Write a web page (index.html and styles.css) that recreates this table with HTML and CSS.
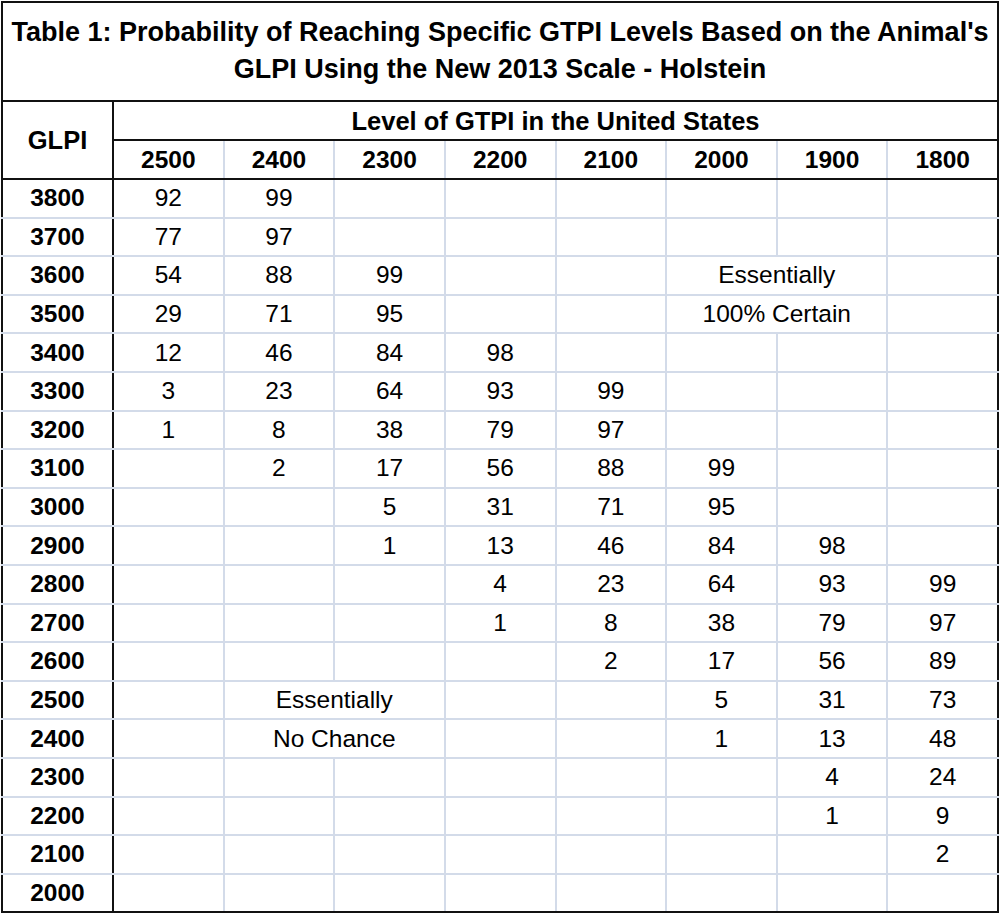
FILE: index.html
```html
<!DOCTYPE html>
<html>
<head>
<meta charset="utf-8">
<link rel="stylesheet" href="styles.css">
</head>
<body>
<table class="tbl">
  <colgroup>
    <col class="c-first">
    <col><col><col><col><col><col><col><col>
  </colgroup>
  <thead>
    <tr class="r-title">
      <th colspan="9" class="title">Table 1: Probability of Reaching Specific GTPI Levels Based on the Animal's<br>GLPI Using the New 2013 Scale - Holstein</th>
    </tr>
    <tr class="r-h1">
      <th rowspan="2" class="glpi-h">GLPI</th>
      <th colspan="8" class="level-h">Level of GTPI in the United States</th>
    </tr>
    <tr class="r-h2">
      <th>2500</th><th>2400</th><th>2300</th><th>2200</th><th>2100</th><th>2000</th><th>1900</th><th>1800</th>
    </tr>
  </thead>
  <tbody>
    <tr><th>3800</th><td>92</td><td>99</td><td></td><td></td><td></td><td></td><td></td><td></td></tr>
    <tr><th>3700</th><td>77</td><td>97</td><td></td><td></td><td></td><td></td><td></td><td></td></tr>
    <tr><th>3600</th><td>54</td><td>88</td><td>99</td><td></td><td></td><td colspan="2">Essentially</td><td></td></tr>
    <tr><th>3500</th><td>29</td><td>71</td><td>95</td><td></td><td></td><td colspan="2">100% Certain</td><td></td></tr>
    <tr><th>3400</th><td>12</td><td>46</td><td>84</td><td>98</td><td></td><td></td><td></td><td></td></tr>
    <tr><th>3300</th><td>3</td><td>23</td><td>64</td><td>93</td><td>99</td><td></td><td></td><td></td></tr>
    <tr><th>3200</th><td>1</td><td>8</td><td>38</td><td>79</td><td>97</td><td></td><td></td><td></td></tr>
    <tr><th>3100</th><td></td><td>2</td><td>17</td><td>56</td><td>88</td><td>99</td><td></td><td></td></tr>
    <tr><th>3000</th><td></td><td></td><td>5</td><td>31</td><td>71</td><td>95</td><td></td><td></td></tr>
    <tr><th>2900</th><td></td><td></td><td>1</td><td>13</td><td>46</td><td>84</td><td>98</td><td></td></tr>
    <tr><th>2800</th><td></td><td></td><td></td><td>4</td><td>23</td><td>64</td><td>93</td><td>99</td></tr>
    <tr><th>2700</th><td></td><td></td><td></td><td>1</td><td>8</td><td>38</td><td>79</td><td>97</td></tr>
    <tr><th>2600</th><td></td><td></td><td></td><td></td><td>2</td><td>17</td><td>56</td><td>89</td></tr>
    <tr><th>2500</th><td></td><td colspan="2">Essentially</td><td></td><td></td><td>5</td><td>31</td><td>73</td></tr>
    <tr><th>2400</th><td></td><td colspan="2">No Chance</td><td></td><td></td><td>1</td><td>13</td><td>48</td></tr>
    <tr><th>2300</th><td></td><td></td><td></td><td></td><td></td><td></td><td>4</td><td>24</td></tr>
    <tr><th>2200</th><td></td><td></td><td></td><td></td><td></td><td></td><td>1</td><td>9</td></tr>
    <tr><th>2100</th><td></td><td></td><td></td><td></td><td></td><td></td><td></td><td>2</td></tr>
    <tr><th>2000</th><td></td><td></td><td></td><td></td><td></td><td></td><td></td><td></td></tr>
  </tbody>
</table>
</body>
</html>
```
FILE: styles.css
```css
html, body {
  margin: 0;
  padding: 0;
  background: #ffffff;
}
.tbl {
  border-collapse: collapse;
  table-layout: fixed;
  width: 998px;
  margin: 1px 0 0 1px;
  font-family: "Liberation Sans", Arial, sans-serif;
  color: #000;
  border: 2px solid #111;
}
.c-first {
  width: 111px;
}
.tbl th, .tbl td {
  padding: 0;
  text-align: center;
  vertical-align: middle;
  border: 2px solid #d3dbe9;
  font-size: 24.5px;
  line-height: 26px;
}
.tbl th {
  font-weight: bold;
  font-size: 24.5px;
}
.tbl td {
  font-weight: normal;
}
.r-title .title {
  height: 95px;
  font-size: 27px;
  line-height: 37px;
  border: 2px solid #111;
  padding-bottom: 2px;
}
.r-h1 th {
  height: 37px;
  border: 2px solid #111;
  font-size: 25.5px;
}
.glpi-h {
  border: 2px solid #111;
}
.r-h2 th {
  height: 37px;
  border-bottom: 2px solid #111;
  border-top: 2px solid #111;
}
.r-h2 th:last-child {
  border-right: 2px solid #111;
}
.tbl tbody tr {
  height: 38.6px;
}
.tbl tbody th {
  border-right: 2px solid #111;
  border-left: 2px solid #111;
}
.tbl tbody td:last-child {
  border-right: 2px solid #111;
}
.tbl tbody tr:last-child th,
.tbl tbody tr:last-child td {
  border-bottom: 2px solid #111;
}
```
